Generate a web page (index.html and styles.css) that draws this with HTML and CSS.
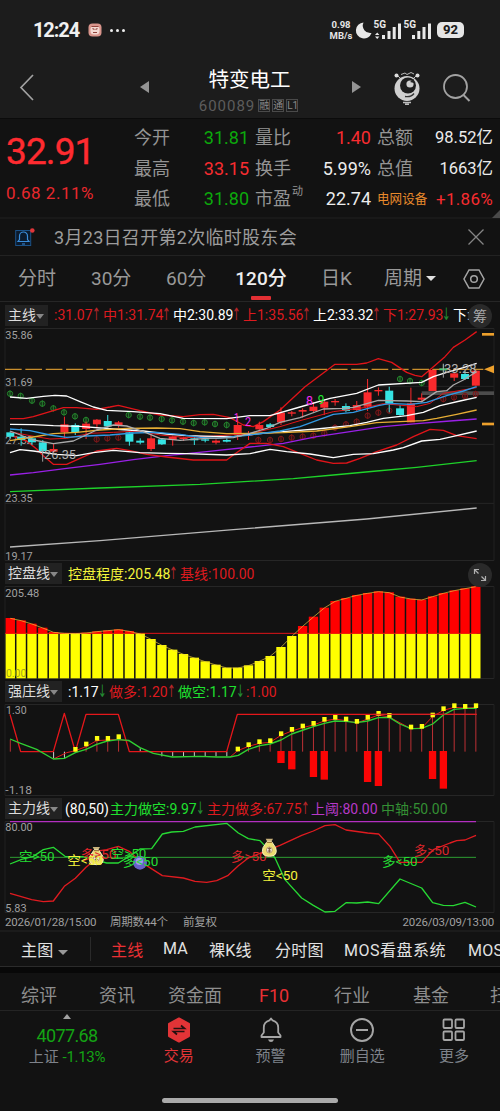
FILE: index.html
```html
<!DOCTYPE html>
<html lang="zh-CN">
<head>
<meta charset="utf-8">
<title>特变电工 600089</title>
<link rel="stylesheet" href="styles.css">
</head>
<body>
<div class="app">
  <div class="status">
    <span class="clock">12:24</span>
    <svg class="appicon" width="14" height="14" viewBox="0 0 14 14"><rect x=".5" y=".5" width="13" height="13" rx="4" fill="#d9958c"/><rect x="2.500" y="3" width="9" height="8.500" rx="3.500" fill="#f3d9d2"/><path d="M3.500 3.500h7M4.500 5.500l2 1M9.500 5.500l-2 1M5 9.500h4" stroke="#91433c" stroke-width="1.200"/></svg>
    <span class="more"><i></i><i></i><i></i></span>
    <span class="speed"><b>0.98</b><b>MB/s</b></span>
    <svg class="sys" width="80" height="22" viewBox="0 0 80 22"><path d="M8.500 3.500A8 8 0 1 0 16.500 14 7.500 7.500 0 0 1 8.500 3.500Z" fill="#e8e8e8"/><g fill="#e8e8e8"><path d="M27 16h3v4h-3zM32.500 12h3v8h-3zM37.700 8h3v12h-3zM43 4.500h3v15.500h-3zM57 16h3v4h-3zM62.300 12h3v8h-3zM67.500 8h3v12h-3zM73 4.500h3v15.500h-3zM20 16l2.200-2.500 2.200 2.500zM20 17.500l2.200 2.500 2.200-2.500z"/><text x="18.500" y="9" class="sig">5G</text><text x="48.500" y="9" class="sig">5G</text></g></svg>
    <span class="battery">92</span>
  </div>
  <header class="header">
    <svg class="back" width="16" height="28" viewBox="0 0 16 28"><path d="M14 2L2 14.500 14 27" fill="none" stroke="#a2a2a2" stroke-width="1.700"/></svg>
    <i class="tri left"></i>
    <div class="title"><h1>特变电工</h1><div class="code">600089 <b>融</b><b>通</b><b>L1</b></div></div>
    <i class="tri right"></i>
    <svg class="robot" width="28" height="34" viewBox="0 0 28 34"><path d="M4 4L8 8M24 4L20 8M8 3.500l4-1.500 2 1.500 4-2 3 1.500" stroke="#bbb" stroke-width="1" fill="none"/><circle cx="3.500" cy="4.500" r="2" fill="#ddd"/><circle cx="24.500" cy="4.500" r="2" fill="#ddd"/><circle cx="14" cy="17.500" r="12.500" fill="#cfcfcf"/><circle cx="15" cy="14.500" r="8" fill="#1d1d1d"/><circle cx="17" cy="13" r="3.600" fill="#cfcfcf"/><path d="M17 11l4-3v4z" fill="#222"/><path d="M12 25.500q6 1 9-3" stroke="#333" fill="none" stroke-width="1.300"/><path d="M10 31.500h8M12 33.300h4" stroke="#bdbdbd" stroke-width="1.500"/></svg>
    <svg class="search" width="29" height="30" viewBox="0 0 29 30"><circle cx="13.500" cy="13.500" r="11.500" fill="none" stroke="#a2a2a2" stroke-width="1.800"/><path d="M21.500 22L27.500 28" stroke="#a2a2a2" stroke-width="2"/></svg>
  </header>
  <section class="quote">
    <div class="price"><strong>32.91</strong><span>0.68 2.11%</span></div>
    <div class="stats">
      <label>今开</label><em class="dn">31.81</em><label>量比</label><em class="up">1.40</em><label>总额</label><em class="sm">98.52亿</em>
      <label>最高</label><em class="up">33.15</em><label>换手</label><em>5.99%</em><label>总值</label><em class="sm">1663亿</em>
      <label>最低</label><em class="dn">31.80</em><label class="pe">市盈<sup>动</sup></label><em>22.74</em><label class="sector">电网设备</label><em class="up chg">+1.86%</em>
    </div>
    <i class="corner"></i>
  </section>
  <section class="news">
    <svg width="20" height="20" viewBox="0 0 20 20"><rect x=".7" y="3.500" width="15" height="15" fill="#0b1b2e" stroke="#1b5288"/><path d="M3 14.500h11l-1.500-2V9a4 4 0 0 0-8 0v3.500zM7 17h3" fill="none" stroke="#3a8edb" stroke-width="1.200"/><circle cx="17.300" cy="3.500" r="2.300" fill="#e0363a"/></svg>
    <span>3月23日召开第2次临时股东会</span>
    <svg width="18" height="18" viewBox="0 0 18 18"><path d="M1.500 1.500l15 15M16.500 1.500l-15 15" stroke="#858585" stroke-width="1.300"/></svg>
  </section>
  <nav class="periods">
    <span>分时</span><span>30分</span><span>60分</span><span class="on">120分</span><span>日K</span><span>周期<i class="caret"></i></span>
    <svg width="22" height="20" viewBox="0 0 22 20"><path d="M6 1h10l5 9-5 9H6l-5-9z" fill="none" stroke="#a5a5a5" stroke-width="1.500"/><circle cx="11" cy="10" r="3.300" fill="none" stroke="#a5a5a5" stroke-width="1.500"/></svg>
  </nav>

  <div class="legend l1"><span class="chip">主线<i class="caret"></i></span>
    <span class="r">:31.07<u>↑</u></span><span class="r">中1:31.74<u>↑</u></span><span class="w">中2:30.89<u>↑</u></span><span class="r">上1:35.56<u>↑</u></span><span class="w">上2:33.32<u>↑</u></span><span class="r">下1:27.93<u class="d">↓</u></span><span class="w last">下:</span><span class="round">筹</span></div>
  <svg class="chart main" viewBox="0 9 1500 699" id="main"></svg>

  <div class="legend l2"><span class="chip">控盘线<i class="caret"></i></span>
    <span class="y">控盘程度:205.48<u>↑</u></span><span class="r">基线:100.00</span>
    <span class="round"><svg width="14" height="14" viewBox="0 0 14 14"><path d="M1.500 6V1.500H6M1.500 1.500l4 4M12.500 8v4.500H8M12.500 12.500l-4-4" fill="none" stroke="#b0b0b0" stroke-width="1.200"/></svg></span></div>
  <svg class="chart control" viewBox="0 78 1500 279" id="control"></svg>

  <div class="legend l3"><span class="chip">强庄线<i class="caret"></i></span>
    <span class="w">:1.17<u class="d">↓</u></span><span class="r">做多:1.20<u>↑</u></span><span class="g">做空:1.17<u class="d">↓</u></span><span class="r">:1.00</span></div>
  <svg class="chart dealer" viewBox="0 72 1500 276" id="dealer"></svg>

  <div class="legend l4"><span class="chip">主力线<i class="caret"></i></span>
    <span class="w">(80,50)</span><span class="g">主力做空:9.97<u class="d">↓</u></span><span class="r">主力做多:67.75<u>↑</u></span><span class="m">上阈:80.00</span><span class="dg">中轴:50.00</span></div>
  <svg class="chart force" viewBox="0 69 1500 276" id="force"></svg>
  <div class="dates"><span>2026/01/28/15:00</span><span>周期数44个</span><span>前复权</span><span class="end">2026/03/09/13:00</span></div>

  <nav class="indicators"><span class="pick">主图<i class="caret"></i></span><span class="on">主线</span><span>MA</span><span>裸K线</span><span>分时图</span><span>MOS看盘系统</span><span>MOS看盘</span></nav>
  <nav class="pages"><span>综评</span><span>资讯</span><span>资金面</span><span class="on">F10</span><span>行业</span><span>基金</span><span>扫雷</span></nav>
  <footer class="bottom">
    <div class="index"><i></i><strong>4077.68</strong><span>上证 <b>-1.13%</b></span></div>
    <div class="act trade"><svg width="24" height="26" viewBox="0 0 24 26"><path d="M12 1.500l10 5.500v12l-10 5.500-10-5.500V7z" fill="#e23437" stroke="#e23437" stroke-width="2" stroke-linejoin="round"/><path d="M6.500 11.500h11l-3.500-3M17.500 14.500h-11l3.500 3" fill="none" stroke="#241010" stroke-width="1.700"/></svg><span>交易</span></div>
    <div class="act"><svg width="24" height="26" viewBox="0 0 24 26"><path d="M2.500 20v-1.500l2.300-3V10.500C4.800 6 8 4 10.500 3.300L12 1.500l1.500 1.800C16 4 19.200 6 19.200 10.500v5l2.300 3V20z" fill="none" stroke="#a5a5a5" stroke-width="1.800" stroke-linejoin="round"/><path d="M9 22.500h6q-1 2.500-3 2.500t-3-2.500z" fill="#a5a5a5"/></svg><span>预警</span></div>
    <div class="act"><svg width="26" height="26" viewBox="0 0 26 26"><circle cx="13" cy="13" r="11" fill="none" stroke="#a5a5a5" stroke-width="1.900"/><path d="M7 13h12" stroke="#a5a5a5" stroke-width="2"/></svg><span>删自选</span></div>
    <div class="act"><svg width="24" height="26" viewBox="0 0 24 26"><g fill="none" stroke="#a5a5a5" stroke-width="1.800"><rect x="1.500" y="2.500" width="8.500" height="8.500" rx="1"/><rect x="13.500" y="2.500" width="8.500" height="8.500" rx="1"/><rect x="1.500" y="14.500" width="8.500" height="8.500" rx="1"/><rect x="13.500" y="14.500" width="8.500" height="8.500" rx="1"/></g></svg><span>更多</span></div>
  </footer>
  <div class="home"><i></i></div>
</div>
<script src="charts.js"></script>
</body>
</html>
```
FILE: styles.css
```css
* { box-sizing: border-box; }
body { margin: 0; background: #121212; color: #e6e6e6; font-family: Roboto, "Noto Sans CJK SC", sans-serif; }
.app { width: 500px; height: 1111px; overflow: hidden; display: flex; flex-direction: column; background: #121212; }
.app > * { flex-shrink: 0; }
i, em { font-style: normal; }
.caret { display: inline-block; border: 5px solid transparent; border-top: 5.500px solid #e0e0e0; border-bottom: 0; }

.status { height: 60px; padding: 0 33px; background: #1c1c1c; display: flex; align-items: center; }
.clock { font-size: 20px; font-weight: 700; letter-spacing: -1.100px; width: 55px; color: #f0f0f0; }
.more { display: flex; gap: 3px; margin-left: 8px; width: 17px; }
.more i { width: 3px; height: 3px; border-radius: 2px; background: #eee; }
.speed { width: 24px; margin-left: 202px; display: flex; flex-direction: column; align-items: center; font-size: 9.500px; line-height: 11px; }
.speed b { font-weight: 700; }
.sys { margin-left: 2px; }
.sig { font-size: 10px; font-weight: 700; }
.battery { margin-left: 2px; width: 27px; height: 16px; border-radius: 5px; background: #e6e6e6; color: #1c1c1c; font-size: 13px; line-height: 16px; font-weight: 800; text-align: center; }

.header { height: 59px; background: #1c1c1c; border-bottom: 1px solid #0b0b0b; display: flex; align-items: center; padding-left: 19px; }
.back { margin-right: 105px; margin-top: -4px; }
.tri { width: 0; height: 0; border: 6.500px solid transparent; margin-top: -4px; }
.tri.left { border-right: 9px solid #949494; border-left: 0; }
.tri.right { border-left: 9px solid #949494; border-right: 0; }
.title { width: 203px; text-align: center; padding: 3px 2px 0 0; }
.title h1 { margin: 0; font-size: 20.500px; line-height: 30px; height: 30px; font-weight: 400; color: #fff; }
.code { display: flex; justify-content: center; align-items: center; color: #5c5c5c; font-size: 15px; letter-spacing: .950px; line-height: 22px; }
.code b { font-weight: 400; font-size: 10px; letter-spacing: 0; line-height: 11px; width: 12px; height: 13px; border: 1px solid #4a4a4a; color: #8a8a8a; margin-right: 2px; }
.code b:first-of-type { margin-left: 3px; }
.robot { margin-left: 32px; margin-top: -2px; }
.search { margin-left: 21px; margin-top: -2px; }

.quote { height: 100px; border-bottom: 2px solid #191919; display: flex; position: relative; }
.price { width: 134px; padding: 11px 0 0 6px; color: #ff2b30; display: flex; flex-direction: column; }
.price strong { font-size: 37px; line-height: 44px; font-weight: 400; letter-spacing: -.9px; -webkit-text-stroke: .4px #ff2b30; }
.price span { font-size: 17px; line-height: 20px; margin-top: 9px; color: #e8282d; letter-spacing: .5px; }
.stats { display: grid; grid-template-columns: 37px 78px 43px 79px 44px 78px; grid-auto-rows: 30.500px; padding-top: 4px; align-items: center; }
.stats label { color: #949494; font-size: 18px; white-space: nowrap; line-height: 30px; }
.stats label:nth-of-type(3n+2), .stats label:nth-of-type(3n) { padding-left: 6px; }
.stats em { text-align: right; font-size: 18px; color: #ececec; white-space: nowrap; line-height: 30px; }
.stats em.sm { font-size: 16.500px; }
.stats em.up { color: #f72c30; }
.stats em.dn { color: #0ca80c; }
.stats em.chg { font-size: 17px; letter-spacing: .3px; }
.pe { position: relative; }
.pe sup { position: absolute; left: 43px; top: -1px; font-size: 11px; line-height: 18px; }
.stats .sector { font-size: 12.600px; color: #e88a2c; }
.corner { position: absolute; right: 0; bottom: -1px; border-left: 8px solid transparent; border-bottom: 8px solid #4a4a4a; }

.news { height: 37px; display: flex; align-items: center; padding: 0 15px; border-bottom: 1px solid #222; color: #9c9c9c; font-size: 18px; }
.news span { flex: 1; margin-left: 19px; letter-spacing: .300px; position: relative; top: -1px; }

.periods { height: 46px; display: grid; grid-template-columns: 73px 75px 70px 85px 63px 79px 22px; padding-left: 18px; align-items: center; border-bottom: 1px solid #262626; font-size: 19px; color: #999; }
.periods span { height: 45px; line-height: 45px; white-space: nowrap; }
.periods .on { color: #eee; font-weight: 500; display: flex; flex-direction: column; width: 50px; align-items: center; }
.periods .on::after { content: ""; width: 20px; height: 4px; border-radius: 1px; background: #e22f33; margin-top: -5px; flex-shrink: 0; }
.periods .caret { margin: 0 0 4px 4px; }

.legend { height: 26px; padding-left: 5px; display: flex; align-items: center; font-size: 14px; white-space: nowrap; position: relative; font-weight: 400; }
.legend span { flex: none; line-height: 20px; }
.legend u { text-decoration: none; display: inline-block; width: 6px; margin-left: -1px; font: 17px/18px "DejaVu Sans"; transform: scaleX(.6); transform-origin: 0 50%; color: #b3262a; }
.legend u.d { color: #248c32; }
.legend .chip { background: #222; color: #ddd; height: 21px; padding-left: 3px; margin-right: 6px; line-height: 20px; }
.chip .caret { border-width: 5px 4px 0; border-top-color: #888; margin: 0 0 1px 0; }
.r { color: #dd1a1f; } .w { color: #fff; } .y { color: #f5f53c; } .g { color: #1fe02f; } .m { color: #b739c8; } .dg { color: #348f34; }
.legend .round { position: absolute; right: 8px; top: 2px; width: 24px; height: 24px; border-radius: 12px; background: #2a2a2a; color: #aaa; display: flex; align-items: center; justify-content: center; }
.l1 .chip { width: 43px; } .l2 .chip, .l3 .chip, .l4 .chip { width: 57px; }
.l1 span:nth-child(2) { width: 49px; } .l1 span:nth-child(3) { width: 70px; } .l1 span:nth-child(4) { width: 70px; }
.l1 span:nth-child(5) { width: 70px; } .l1 span:nth-child(6) { width: 70px; } .l1 span:nth-child(7) { width: 70px; }
.l2 span:nth-child(2) { width: 112px; }
.l3 span:nth-child(2) { width: 41px; } .l3 span:nth-child(3) { width: 69px; } .l3 span:nth-child(4) { width: 68px; }
.l4 .chip { margin-right: 3px; }
.l4 span:nth-child(2) { width: 45px; } .l4 span:nth-child(3) { width: 97px; } .l4 span:nth-child(4) { width: 104px; } .l4 span:nth-child(5) { width: 70px; }
.chart { display: block; width: 500px; overflow: visible; }
.main { height: 233px; } .l2 { height: 25px; } .control { height: 93px; } .l3 { height: 25px; } .dealer { height: 92px; } .l4 { height: 25px; } .force { height: 92px; }
.chart text { font-family: Roboto, "Noto Sans CJK SC", sans-serif; }
.dates { height: 17px; padding: 0 6px 0 5px; display: flex; font-size: 11.500px; line-height: 18px; color: #a0a0a0; letter-spacing: -.2px; white-space: nowrap; }
.dates span:nth-child(1) { width: 105px; } .dates span:nth-child(2) { width: 73px; } .dates .end { margin-left: auto; }

.indicators { height: 37px; border-top: 2px solid #1b1b1b; border-bottom: 1px solid #2b2b2b; padding: 0 0 1px 21px; display: flex; align-items: center; font-size: 16px; white-space: nowrap; color: #e2e2e2; letter-spacing: .2px; overflow: hidden; }
.indicators span { flex: none; }
.indicators .pick { width: 70px; border-right: 1px solid #2a2a2a; margin-right: 20px; }
.pick .caret { margin: 0 0 1px 5px; border-top-color: #999; }
.indicators .on, .pages .on { color: #e93034; }
.indicators span:nth-child(2) { width: 52px; } .indicators span:nth-child(3) { width: 46px; } .indicators span:nth-child(4) { width: 66px; }
.indicators span:nth-child(5) { width: 69px; } .indicators span:nth-child(6) { width: 124px; letter-spacing: .5px; }
.pages { height: 44px; border-top: 6px solid #080808; border-bottom: 1px solid #242424; padding: 9px 0 0 21px; display: grid; grid-template-columns: 78px 69px 91px 75px 79px 77px 40px; font-size: 18px; line-height: 28px; color: #8e8e8e; white-space: nowrap; }
.bottom { height: 79px; display: flex; padding-left: 11px; color: #7e828a; }
.index { width: 112px; margin-right: 10px; display: flex; flex-direction: column; align-items: center; padding-top: 3px; }
.index i { border: 4.500px solid transparent; border-bottom: 5px solid #a0a0a0; border-top: 0; }
.index strong { font-weight: 400; font-size: 18px; line-height: 22px; color: #14a314; margin-top: 6px; letter-spacing: -.6px; }
.index span { font-size: 15px; line-height: 22px; margin-top: -1px; white-space: nowrap; }
.index b { font-weight: 400; color: #14a314; letter-spacing: -.300px; }
.act { width: 91.700px; display: flex; flex-direction: column; align-items: center; padding-top: 6px; }
.act svg { height: 26px; }
.act span { font-size: 15px; line-height: 24px; margin-top: 1px; }
.trade { color: #e23437; }
.home { flex: 1; display: flex; justify-content: center; align-items: flex-start; padding-top: 8px; }
.home i { width: 176px; height: 5px; border-radius: 3px; background: #aaa; }
```
FILE: charts.js
```js
// Chart space is three units per CSS pixel; each panel's viewBox sets its vertical origin.
const cx = i => 30.9 + 32.48 * i;
const line = (pts, color, w = 4) => `<polyline points="${pts}" fill="none" stroke="${color}" stroke-width="${w}" stroke-linejoin="round"/>`;
const rect = (x, y, w, h, c) => `<rect x="${x}" y="${y}" width="${w}" height="${h}" fill="${c}"/>`;
const text = (x, y, s, len, color, size = 34) => `<text x="${x}" y="${y}" textLength="${len}" lengthAdjust="spacingAndGlyphs" fill="${color}" font-size="${size}">${s}</text>`;
const grid = ys => ys.map(y => line(`15,${y} 1482,${y}`, '#262626', 3)).join('') + line(`15,${ys[0]} 15,${ys[ys.length - 1]}`, '#202020', 3) + line(`1482,${ys[0]} 1482,${ys[ys.length - 1]}`, '#202020', 3);
const GREY = '#a0a0a0';

function drawMain() {
  let s = grid([10.500, 184, 358, 535, 706.500]);
  s += text(16, 42, '35.86', 82, GREY) + text(16, 182, '31.69', 82, GREY) + text(16, 357, '27.52', 82, GREY) + text(16, 531, '23.35', 82, GREY) + text(16, 704, '19.17', 82, GREY);
  s += '<path d="M15 133H1450" stroke="#c98f2d" stroke-width="4" stroke-dasharray="50 11.100"/>';
  s += rect(1265, 199, 217, 11, '#4c4c4c');
  const green = [[30,206],[62,213],[96,227],[127,236],[160,250],[192,262],[225,274],[258,285],[386,270],[420,275],[450,278],[485,282],[516,286],[549,290],[581,294],[614,292],[645,297],[680,300],[1200,162],[1230,168],[1265,174]];
  const red = [[290,343],[322,340],[355,338],[775,345],[810,345],[843,342],[875,338],[908,335],[940,332],[973,325],[1005,308],[1038,298],[1070,290],[1103,272],[1135,263],[1168,257],[1330,222],[1362,217],[1395,213],[1427,207]];
  const ring = (p, c) => `<ellipse cx="${p[0]}" cy="${p[1]}" rx="8" ry="8" fill="${c}33" stroke="${c}" stroke-width="3"/><path d="M${p[0]} ${p[1] - 10}v20" stroke="${c}" stroke-width="3"/>`;
  s += green.map(p => ring(p, '#24842c')).join('') + red.map(p => ring(p, '#7c1719')).join('');
  s += line('30,450 100,443 200,430 300,418 400,404 500,392 620,380 750,366 850,355 950,335 1050,320 1150,305 1250,296 1350,288 1430,282', '#9a20e6');
  s += line('30,500 300,489 600,478 880,461 1000,450 1130,438 1250,427 1430,407', '#1ed22a');
  s += line('30,666 300,647 700,614 1100,582 1430,549', '#b8b8b8');
  s += line('30,281 70,281 100,275 130,266 190,248 230,248 290,253 330,246 355,241 420,257 480,270 550,275 600,269 640,268 690,278 730,300 760,305 790,290 840,255 915,185 1005,118 1070,118 1100,114 1135,101 1175,112 1220,142 1245,151 1265,155 1295,130 1335,95 1360,67 1395,45 1430,20', '#e01419');
  s += line('30,330 80,348 110,372 130,392 160,418 200,418 240,400 290,378 350,370 390,377 440,388 500,396 580,405 680,405 700,390 750,355 800,355 850,365 900,385 950,405 1000,415 1040,414 1080,400 1130,380 1190,360 1240,335 1290,313 1330,316 1370,332 1430,341', '#e01419');
  const candles = [
    ['c',322,335,318,340],['c',335,345,310,362],['c',340,352,335,360],['c',352,378,345,385],['r',372,380,355,385],['r',298,322,275,340],['c',300,322,295,330],['r',296,312,290,342],['r',284,298,282,310],['c',288,304,270,308],['r',292,302,288,308],
    ['c',322,350,318,362],['c',347,353,340,358],['r',340,372,325,378],['c',343,358,340,360],['r',335,345,332,362],['r',338,342,335,348],['c',340,346,335,360],['c',343,347,338,352],['r',347,353,343,358],['c',345,350,340,352],['r',300,330,272,345],
    ['r',325,332,318,345],['r',300,313,290,320],['c',298,306,294,310],['r',263,292,247,300],['r',262,266,258,274],['r',255,260,250,278],['r',245,258,232,262],['r',230,248,222,270],['r',228,232,222,242],['c',243,258,235,262],['r',240,255,228,260],
    ['r',202,245,162,258],['r',195,199,187,212],['c',197,238,185,262],['c',250,270,240,272],['r',235,292,188,292],['r',218,224,205,232],['r',135,198,132,198],['g',130,136,118,145],['r',145,158,140,168],['c',147,162,138,165],['r',137,182,135,182]];
  const tone = { c: '#35e3e3', r: '#f92a2d', g: '#48c878' };
  s += candles.map(([k, t, b, wt, wb], i) => rect(cx(i) - 1.500, wt, 3, wb - wt, tone[k]) + rect(cx(i) - 12, t, 24, b - t, tone[k])).join('');
  s += line('30,320 90,332 150,342 200,340 270,325 340,322 420,318 480,330 560,338 640,333 750,326 840,305 900,287 1000,260 1100,247 1150,236 1250,245 1290,235 1330,205 1430,188', '#e01419', 3);
  s += line('30,298 100,299 160,302 240,304 340,312 430,318 500,327 560,332 640,334 700,335 750,328 850,320 950,312 1050,302 1100,292 1150,280 1220,272 1270,262 1320,242 1380,228 1430,217', '#fff');
  s += line('30,347 100,336 160,326 230,322 300,315 380,310 470,309 540,311 600,320 680,326 750,325 850,323 950,318 1050,305 1130,293 1270,287 1310,280 1370,268 1430,255', '#e7ae35');
  s += line('30,312 90,317 150,330 200,337 260,333 330,330 400,324 470,322 540,328 600,337 650,340 750,330 840,318 900,305 1000,268 1060,262 1135,242 1170,235 1230,238 1280,232 1340,212 1390,198 1430,185', '#3199e3');
  s += line('30,318 100,345 160,356 220,348 290,315 340,300 380,303 430,320 480,340 540,346 620,340 700,338 750,325 800,310 840,292 900,278 970,252 1030,250 1060,247 1135,226 1220,228 1265,230 1310,200 1340,197 1360,180 1390,165 1430,140', '#aaa');
  s += line('30,383 60,374 100,378 170,388 230,392 280,383 340,376 420,383 500,385 560,386 680,390 750,386 810,373 860,380 930,387 1000,398 1060,388 1120,386 1180,375 1210,368 1265,348 1320,343 1360,334 1430,318', '#fff');
  s += line('30,216 80,220 130,214 165,211 200,213 240,230 280,246 320,256 400,260 480,266 550,280 680,281 750,272 810,272 900,246 990,220 1070,205 1135,180 1265,172 1300,155 1340,142 1390,128 1430,115', '#fff');
  s += text(132, 402, '26.35', 96, '#b0b0b0', 38) + text(1332, 145, '33.28', 98, '#b0b0b0', 38);
  s += line('128,372 128,410', GREY, 3) + line('1330,116 1330,158', GREY, 3);
  s += text(702, 291, '1', 15, '#f32af3', 36) + text(735, 303, '2', 18, '#f32af3', 36) + text(918, 241, '8', 21, '#f32af3', 38) + text(953, 237, '9', 20, '#20e52e', 38);
  s += rect(1446, 24, 36, 8, '#eda02c') + rect(1446, 293, 36, 8, '#eda02c') + '<path d="M1452 133l30-12v24z" fill="#eda02c"/>';
  document.getElementById('main').innerHTML = s;
}

function drawControl() {
  const top = [174,181,191,203,216,219,220,218,214,211,208,213,221,237,255,269,282,293,304,314,323,323,316,303,288,261,228,198,170,143,123,114,105,99,94,97,110,116,119,109,99,91,85,79];
  let s = grid([79.500, 355.500]) + text(16, 111, '205.48', 102, GREY) + line('15,220 1430,220', '#e01419', 3);
  s += top.map((y, i) => rect(cx(i) - 14, Math.max(y, 221), 28, 355 - Math.max(y, 221), '#ffff00') + (y < 220 ? rect(cx(i) - 14, y, 28, 221 - y, '#ff0000') : '')).join('');
  s += line(top.map((y, i) => `${cx(i)},${y + 1}`).join(' '), '#f0d040', 2);
  s += text(18, 350, '0.00', 61, '#a5a51c');
  document.getElementById('control').innerHTML = s;
}

function drawDealer() {
  let s = grid([73.500, 346.500]) + text(18, 103, '1.30', 62, GREY) + text(16, 342, '-1.18', 80, GREY);
  const marks = { 6:208,7:192,8:175,9:175,10:170,21:207,22:194,23:185,24:182,25:161,26:148,27:138,28:130,29:118,30:112,31:117,32:124,33:112,34:100,35:106,37:141,38:139,39:105,40:86,41:77,42:79,43:77 };
  const stems = { 0: 180, 36: 130, ...marks };
  for (const i in stems) s += line(`${cx(+i)},215 ${cx(+i)},${stems[i]}`, '#bd3034', 3);
  for (const i of [4, 5, 12, 14, 15, 16, 17, 18, 19, 20]) s += line(`${cx(i)},215 ${cx(i)},${i < 6 ? 235 : i === 12 ? 205 : 229}`, '#cfcfcf', 3);
  const bars = { 25:249,26:268,28:291,29:299,33:306,34:318,39:297,40:326 };
  for (const i in bars) s += rect(cx(+i) - 11, 213, 22, bars[i] - 213, '#fb0505');
  s += line('30,103 62,215 160,215 193,100 226,215 258,103 355,103 388,215 680,215 712,103 1430,103', '#e5171b');
  s += line('160,237 200,218 226,212 258,200 290,182 323,180 355,178 386,183', '#e5171b', 3);
  s += line('690,231 ' + Object.keys(marks).filter(i => i > 20).map(i => `${cx(+i)},${marks[i] + 5}`).join(' '), '#e5171b', 3);
  s += line('30,177 62,190 110,208 160,237 193,235 226,218 258,208 290,193 322,183 355,179 386,181 420,203 460,220 517,231 600,229 650,231 690,231 715,226 745,208 780,197 810,192 843,180 875,162 910,150 940,140 973,130 1005,123 1038,124 1070,128 1103,123 1135,113 1168,112 1200,132 1233,146 1265,145 1298,132 1330,105 1362,88 1395,85 1430,85', '#2fce32');
  for (const i in marks) s += rect(cx(+i) - 6, marks[i] - 7, 13, 14, '#ffff10');
  s += line('1120,103 1430,103', '#d42225', 3);
  document.getElementById('dealer').innerHTML = s;
}

function bag(x, y) {
  return `<g transform="translate(${x} ${y})"><path d="M-11-31h22l-5 9h-12z" fill="#cbb47c"/><path d="M-7-22h14l12 18q8 26-19 26t-19-26z" fill="#ecdc72" stroke="#f9f1bd" stroke-width="3"/><path d="M-8-20h16" stroke="#8b682c" stroke-width="3"/><circle cy="3" r="9" fill="#f6f1dc" stroke="#a27c45" stroke-width="2"/><path d="M0-5v16M-5-1h10M-5 6h10" stroke="#74513a" stroke-width="3"/></g>`;
}

function drawForce() {
  let s = grid([70.500, 343.500]) + text(16, 100, '80.00', 82, GREY) + text(16, 341, '5.83', 64, GREY);
  s += line('30,71 1428,71', '#b32fc0', 4) + line('30,178 1428,178', '#2d9e32', 3);
  s += line('30,286 95,305 130,311 160,309 193,265 226,241 258,208 280,190 300,158 320,155 355,145 388,160 420,190 487,233 550,240 585,250 620,253 650,248 683,233 715,203 745,180 800,158 840,142 905,112 940,99 975,83 1005,80 1038,96 1103,105 1136,108 1170,145 1200,193 1265,193 1300,155 1350,135 1370,128 1395,126 1428,112', '#e01b20');
  s += line('30,198 65,184 100,175 130,155 160,148 195,175 250,176 320,195 355,195 388,175 420,153 455,152 487,108 515,102 550,100 585,87 680,76 715,105 745,122 780,128 805,155 825,180 855,245 905,300 940,322 975,342 1005,340 1038,314 1070,315 1103,312 1136,317 1200,243 1265,270 1298,314 1330,322 1360,323 1395,313 1428,327', '#27d934');
  s += '<circle cx="420" cy="194" r="21" fill="#6760c8"/><circle cx="418" cy="190" r="11" fill="#9c99ed"/>' + bag(289, 178);
  const tag = (x, y, t, c) => text(x, y, t, 107, c, 39);
  s += tag(57, 190, '空&gt;50', '#24dc32') + tag(242, 183, '多&gt;50', '#e5252a') + tag(202, 201, '空&lt;50', '#f2f23c') + tag(332, 180, '空&gt;50', '#24dc32') + tag(368, 204, '多&lt;50', '#24dc32');
  s += tag(693, 190, '多&gt;50', '#d9252a') + tag(787, 247, '空&lt;50', '#f2f23c') + tag(1146, 204, '多&lt;50', '#24dc32') + tag(1241, 171, '多&gt;50', '#d9252a');
  s += bag(808, 153);
  document.getElementById('force').innerHTML = s;
}

drawMain();
drawControl();
drawDealer();
drawForce();
```
